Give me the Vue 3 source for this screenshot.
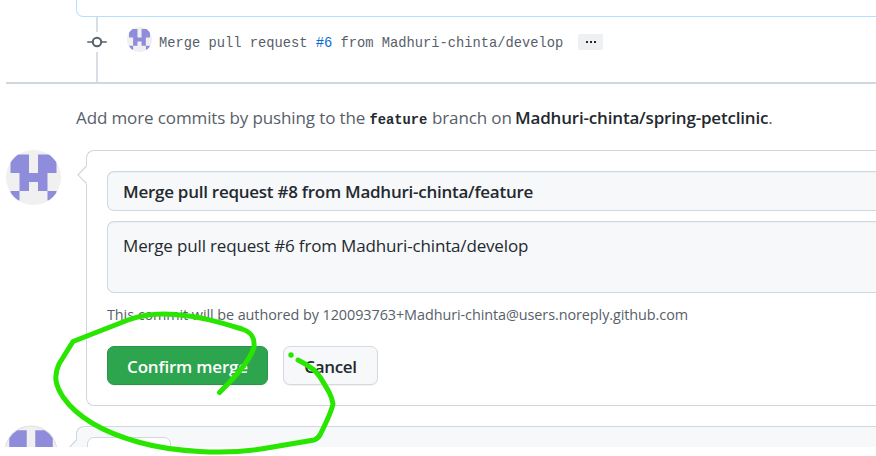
<script setup>
const identicon = 'M4.5 4.5H23V23H32V4.5H50.5V23H41.5V41H50.5V50.5H41.5V41H32V32H23V41H13.5V50.5H4.5V41H13.5V23H4.5Z'
</script>

<template>
  <main class="page">
    <section class="timeline">
      <div class="review-end"></div>
      <div class="commit">
        <div class="rail">
          <i class="rail-top"></i>
          <svg class="commit-icon" viewBox="0 0 20 20" width="20" height="20">
            <circle cx="10" cy="10" r="4.2" fill="none" stroke="#57606a" stroke-width="2" />
            <path d="M.8 10H5.8M14.2 10H19.2" stroke="#57606a" stroke-width="1.7" stroke-linecap="round" />
          </svg>
          <i class="rail-bottom"></i>
        </div>
        <svg class="avatar-small" viewBox="0 0 55 55">
          <clipPath id="small"><circle cx="27.5" cy="27.5" r="27.5" /></clipPath>
          <g clip-path="url(#small)"><path fill="#f0f0f0" d="M0 0H55V55H0Z" /><path fill="#8f8cdb" :d="identicon" /></g>
        </svg>
        <span class="message">Merge pull request <a>#6</a> from Madhuri-chinta/develop</span>
        <button class="more"><i></i><i></i><i></i></button>
      </div>
    </section>

    <p class="push-note"><span class="n1">Add more commits by pushing to the</span><code>feature</code><span class="n2">branch on</span><strong>Madhuri-chinta/spring-petclinic</strong>.</p>

    <section class="merge">
      <svg class="avatar" viewBox="0 0 55 55">
        <clipPath id="large"><circle cx="27.5" cy="27.5" r="27.5" /></clipPath>
        <g clip-path="url(#large)"><path fill="#f0f0f0" d="M0 0H55V55H0Z" /><path fill="#8f8cdb" :d="identicon" /></g>
      </svg>
      <div class="merge-box">
        <svg class="caret" width="10" height="20" viewBox="0 0 10 20"><path d="M10 0V1L1 10L10 19V20" fill="#fff" /><path d="M9.5 1L1 9.8L9.5 18.5" fill="none" stroke="#d0d7de" stroke-width="1.2" /></svg>
        <div class="field title"><span>Merge pull request #8 from Madhuri-chinta/feature</span></div>
        <div class="field body"><span>Merge pull request #6 from Madhuri-chinta/develop</span></div>
        <p class="author">This commit will be authored by 120093763+Madhuri-chinta@users.noreply.github.com</p>
        <div class="actions">
          <button class="btn confirm">Confirm merge</button>
          <button class="btn cancel">Cancel</button>
        </div>
      </div>
    </section>

    <section class="comment">
      <svg class="avatar-next" width="54" height="54" viewBox="-1 -1 57 57">
        <clipPath id="next"><circle cx="27.5" cy="27.5" r="27.5" /></clipPath>
        <g clip-path="url(#next)"><path fill="#f0f0f0" d="M0 0H55V55H0Z" /><path fill="#8f8cdb" :d="identicon" /></g>
        <circle cx="27.5" cy="27.5" r="27.5" fill="none" stroke="#dcdcdc" />
      </svg>
      <div class="comment-box">
        <svg class="caret next" width="10" height="20" viewBox="0 0 10 20"><path d="M10 0V1L1 10L10 19V20" fill="#f6f8fa" /><path d="M9.5 1L1 9.8" fill="none" stroke="#d0d7de" stroke-width="1.2" /></svg>
        <div class="tab"></div>
      </div>
    </section>

    <svg class="marker" width="876" height="456" viewBox="0 0 876 456">
      <path d="M219.500 392.500C235 377 250 361 254 347C255 337 251 332 242 329C222 323 200 316 174 314.500C155 313 142 315 128 320L73 341.500L59 364C53 377 56 386 63 397C79 420 106 433 138 442C173 452 225 455 264 448.500L314 440C317 439 318 438 320 435C326 423 331 413 333 404C332 396 328 390 320 377C316 370 308 365 298 360" />
      <circle cx="291" cy="355" r="2.700" />
    </svg>
  </main>
</template>

<style>
body { margin: 0; background: #fff; }
</style>

<style scoped>
* { box-sizing: border-box; }
.page { position: relative; width: 876px; height: 456px; overflow: hidden; background: #fff; color: #24292f; font-family: "Open Sans", "Noto Sans", sans-serif; font-size: 17px; }
p { margin: 0; white-space: nowrap; }
svg { display: block; flex: none; }
.timeline { height: 84px; margin-left: 6px; border-bottom: 2px solid #d0d7de; }
.review-end { height: 17px; margin-left: 70px; border: solid #b6dfff; border-width: 0 0 1px 1px; border-radius: 0 0 0 7px; }
.commit { display: flex; height: 65px; align-items: flex-start; }
.rail { display: flex; flex-direction: column; align-items: center; width: 20px; height: 65px; margin-left: 81px; }
.rail i { width: 2px; background: #d8dee4; }
.rail-top { height: 15px; }
.rail-bottom { flex: 1; }
.avatar-small { width: 25px; height: 25px; margin: 10px 0 0 20px; }
.message { width: 405px; margin: 17px 0 0 7px; white-space: pre; font: 13.75px/20px "Liberation Mono", monospace; color: #57606a; }
.message a { color: #0969da; }
.more { display: flex; justify-content: center; align-items: center; gap: 2px; width: 25px; height: 16px; margin: 17px 0 0 14px; padding: 0; border: 0; border-radius: 1px; background: #eff0f2; }
.more i { width: 2px; height: 2px; background: #24292f; }
.push-note { display: flex; align-items: baseline; height: 66px; padding: 21px 0 0 76px; line-height: 26px; color: #57606a; letter-spacing: -.12px; }
.n1 { width: 293.5px; }
.push-note code { width: 62.5px; font: bold 13.75px "Liberation Mono", monospace; letter-spacing: 0; color: #24292f; }
.n2 { width: 83px; }
.push-note strong { font-weight: 600; letter-spacing: -.18px; color: #24292f; }
.merge { display: flex; height: 256px; padding-left: 6px; }
.avatar { width: 55px; height: 55px; }
.merge-box { position: relative; flex: 1; height: 256px; margin-left: 25px; padding: 20px 0 0 20px; border: 1px solid #d0d7de; border-right: 0; border-radius: 8px 0 0 8px; }
.caret { position: absolute; left: -10px; top: 14px; }
.field { padding-left: 15px; border: 1px solid #d0d7de; border-right: 0; border-radius: 7px 0 0 7px; background: #f6f8fa; box-shadow: inset 0 1px 0 rgba(208, 215, 222, .2); white-space: nowrap; }
.title { height: 40px; line-height: 39px; font-weight: 600; letter-spacing: -.26px; }
.body { height: 72px; margin-top: 10px; padding-top: 11px; line-height: 25px; letter-spacing: -.16px; }
.author { height: 53px; padding-top: 11px; font-size: 14.4px; line-height: 22px; letter-spacing: -.07px; color: #57606a; }
.actions { display: flex; gap: 15px; }
.btn { height: 39px; padding: 2px 0 0; border: 1px solid #d5d9de; border-radius: 7px; font: 600 17px "Open Sans", sans-serif; box-shadow: 0 1px 0 rgba(27, 31, 36, .06); letter-spacing: -.2px; }
.confirm { width: 161px; background: #2da44e; border-color: #2b964a; color: #fff; }
.cancel { width: 95px; background: #f6f8fa; color: #24292f; letter-spacing: -.3px; }
.comment { display: flex; height: 23px; margin-top: 18px; padding-left: 4px; overflow: hidden; }
.avatar-next { margin-top: 1px; }
.comment-box { position: relative; flex: 1; height: 60px; margin: 2px 0 0 18px; padding: 10px; border: 1px solid #d0d7de; border-right: 0; border-radius: 8px 0 0; background: #f6f8fa; }
.caret.next { top: 12px; left: -10px; }
.tab { width: 84px; height: 50px; border: 1px solid #d0d7de; border-radius: 7px 7px 0 0; background: #fff; }
.marker { position: absolute; inset: 0; pointer-events: none; }
.marker path { fill: none; stroke: #28e600; stroke-width: 5; stroke-linecap: round; stroke-linejoin: round; }
.marker circle { fill: #28e600; }
</style>
